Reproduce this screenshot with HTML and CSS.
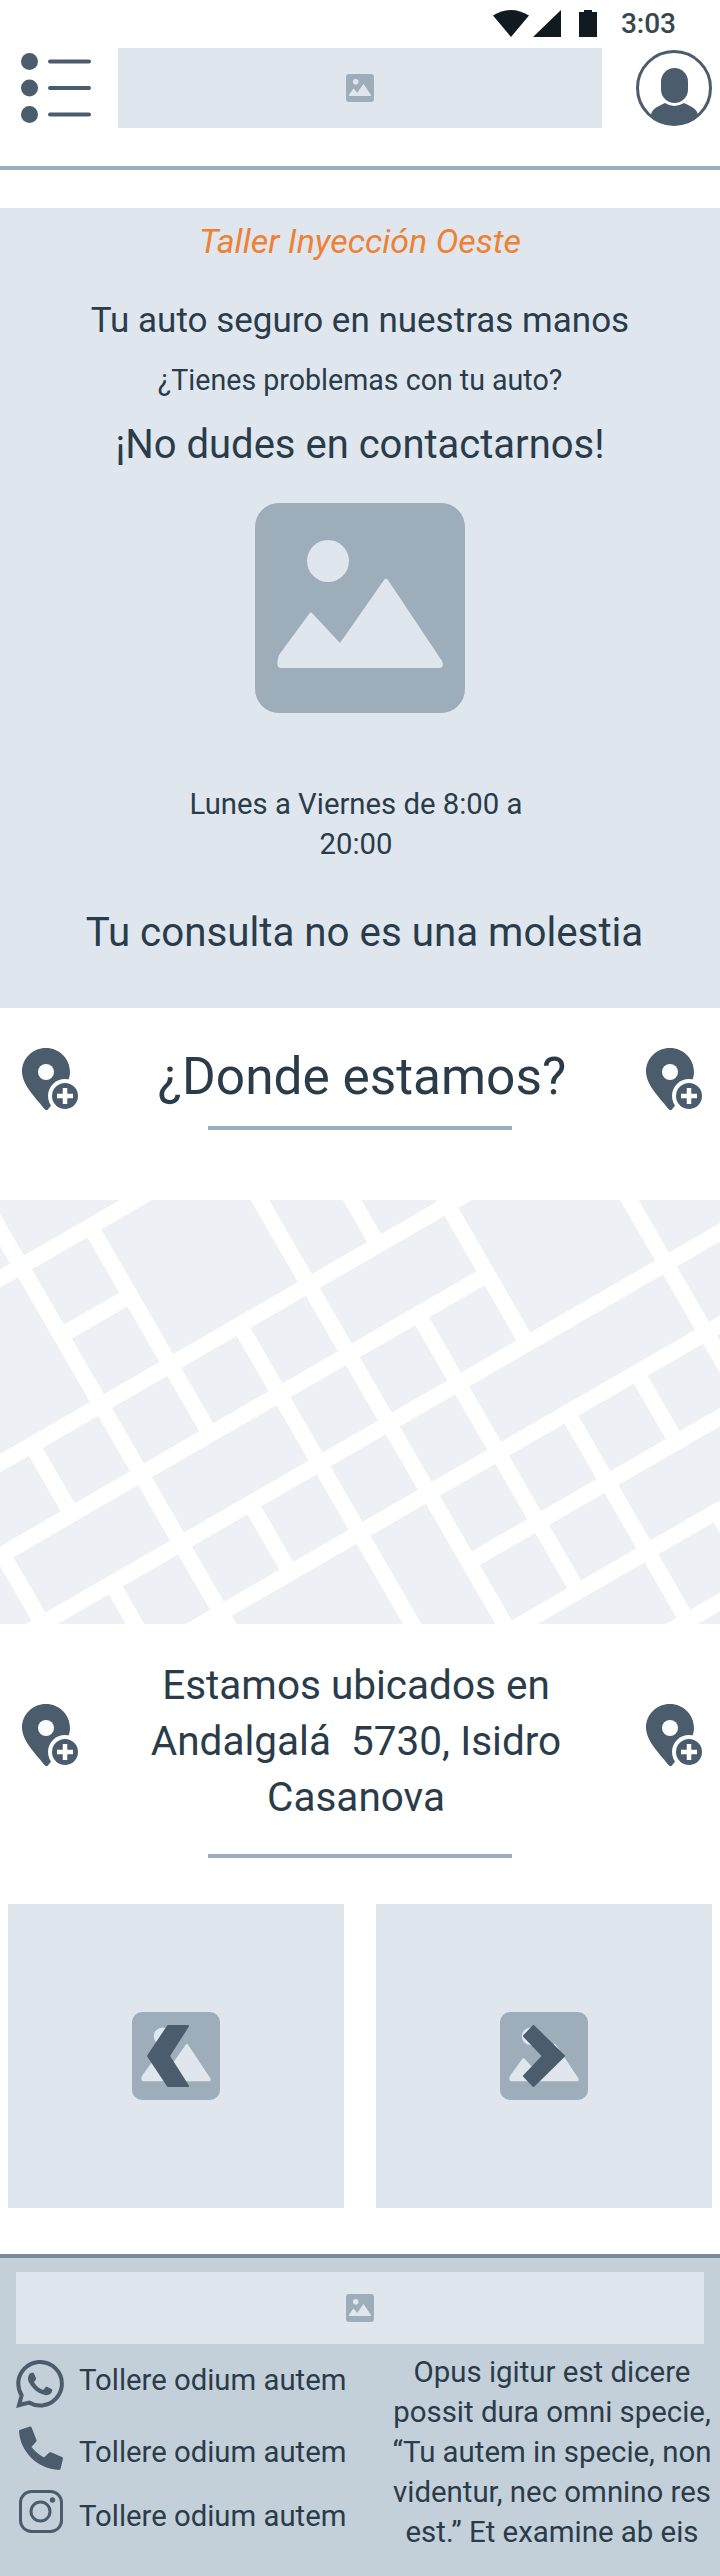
FILE: index.html
```html
<!DOCTYPE html>
<html lang="es">
<head>
    <meta charset="UTF-8">
    <meta name="viewport" content="width=device-width, initial-scale=1.0">
    <title>Taller Inyección Oeste</title>
    <link rel="stylesheet" href="styles.css">
</head>
<body>
    <!-- shared icons -->
    <svg class="icon-defs" aria-hidden="true">
        <symbol id="img-placeholder" viewBox="0 0 210 210">
            <rect width="210" height="210" rx="24" fill="#9eadba"/>
            <circle cx="73" cy="58" r="21" fill="#dfe6ee"/>
            <path d="M24 152 L54 111 Q56 108 58 111 L85 140 L129 77 Q131 74 133 77 L187 158 Q190 165 184 165 L26 165 Q20 165 24 152Z" fill="#dfe6ee"/>
        </symbol>
        <symbol id="pin-plus" viewBox="0 0 56 62">
            <path d="M24 0C37.3 0 48 10.7 48 24C48 37 33 52 26 61.5C25 62.5 23.5 62.5 22.5 61C14 50 0 37 0 23.5C0 10.5 10.7 0 24 0Z" fill="#4b5d6c"/>
            <circle cx="24" cy="24" r="8" fill="#fff"/>
            <circle cx="43" cy="48" r="17" fill="#fff"/>
            <circle cx="43" cy="48" r="13" fill="#4b5d6c"/>
            <path d="M35 48H51M43 40V56" stroke="#fff" stroke-width="4.5"/>
        </symbol>
    </svg>

    <div class="status-bar">
        <svg class="status-wifi" viewBox="0 0 36 27"><path d="M0 5.6Q18 -5.6 36 5.6L18 27Z"/></svg>
        <svg class="status-signal" viewBox="0 0 28 27"><path d="M0 27L28 0V27Z"/></svg>
        <svg class="status-battery" viewBox="0 0 18 27"><path d="M5 0H13V2H18V27H0V2H5Z"/></svg>
        <span class="status-time">3:03</span>
    </div>

    <header class="topbar">
        <svg class="menu-icon" viewBox="0 0 70 70">
            <circle cx="8.5" cy="8.5" r="8.5"/>
            <circle cx="8.5" cy="35" r="8.5"/>
            <circle cx="8.5" cy="61.5" r="8.5"/>
            <path class="menu-line" d="M29 8.5H68M29 35H68M29 61.5H68"/>
        </svg>
        <div class="logo-box">
            <svg class="img-small"><use href="#img-placeholder"/></svg>
        </div>
        <svg class="avatar" viewBox="0 0 76 76">
            <defs><clipPath id="avatar-clip"><circle cx="38" cy="38" r="36"/></clipPath></defs>
            <circle cx="38" cy="38" r="36.5" fill="none" stroke="#4b5d6c" stroke-width="3"/>
            <rect x="25" y="18" width="27" height="35" rx="13.5" fill="#4b5d6c"/>
            <path clip-path="url(#avatar-clip)" d="M15 76V66C15 60 20 57 29 53Q38 59 48 53C57 57 62 60 62 66V76Z" fill="#4b5d6c"/>
        </svg>
    </header>

    <section class="hero">
        <h1 class="hero-title">Taller Inyección Oeste</h1>
        <p class="hero-slogan">Tu auto seguro en nuestras manos</p>
        <p class="hero-question">¿Tienes problemas con tu auto?</p>
        <p class="hero-call">¡No dudes en contactarnos!</p>
        <svg class="hero-image"><use href="#img-placeholder"/></svg>
        <p class="hero-hours">Lunes a Viernes de 8:00 a<br>20:00</p>
        <p class="hero-note">Tu consulta no es una molestia</p>
    </section>

    <section class="where">
        <div class="pin-row">
            <svg class="pin"><use href="#pin-plus"/></svg>
            <h2 class="where-title">¿Donde estamos?</h2>
            <svg class="pin"><use href="#pin-plus"/></svg>
        </div>
        <div class="rule"></div>
    </section>

    <svg class="map" viewBox="0 0 720 424">
        <rect width="720" height="424" fill="#edf0f5"/>
        <g transform="rotate(-30)" fill="none" stroke="#fff" stroke-width="16">
            <!-- avenues -->
            <path d="M-500 68H900M-500 228H900M-500 388H900M-500 468H900M-500 628H900M-500 708H900"/>
            <path d="M-15 148H65M-500 308H385M225 548H900"/>
            <!-- cross streets -->
            <path d="M-15 -100V900M225 -100V900M145 228V900"/>
            <path d="M65 68V308M65 388V468M305 -100V228M305 308V628M385 -100V388M385 468V708"/>
            <path d="M-95 228V308M-95 388V900M-175 308V388M465 468V548M465 628V900M545 -100V548"/>
        </g>
    </svg>

    <section class="address">
        <div class="pin-row pin-row-address">
            <svg class="pin"><use href="#pin-plus"/></svg>
            <h3 class="address-text">Estamos ubicados en<br>Andalgalá&nbsp; 5730, Isidro<br>Casanova</h3>
            <svg class="pin"><use href="#pin-plus"/></svg>
        </div>
        <div class="rule"></div>
    </section>

    <div class="gallery">
        <div class="gallery-card">
            <div class="gallery-image">
                <svg class="img-medium"><use href="#img-placeholder"/></svg>
                <svg class="chevron" viewBox="0 0 88 88"><path d="M36 14H56L37 44L56 74H36L16 44Z"/></svg>
            </div>
        </div>
        <div class="gallery-card">
            <div class="gallery-image">
                <svg class="img-medium"><use href="#img-placeholder"/></svg>
                <svg class="chevron" viewBox="0 0 88 88"><path d="M33.5 14L64 44L33.5 74L24 64L43 44L24 24Z"/></svg>
            </div>
        </div>
    </div>

    <footer class="footer">
        <div class="footer-logo">
            <svg class="img-small"><use href="#img-placeholder"/></svg>
        </div>
        <div class="footer-columns">
            <ul class="contact-list">
                <li class="contact-row">
                    <svg class="contact-icon icon-whatsapp" viewBox="0 0 24 24"><path d="M17.472 14.382c-.297-.149-1.758-.867-2.03-.967-.273-.099-.471-.148-.67.15-.197.297-.767.966-.94 1.164-.173.199-.347.223-.644.075-.297-.15-1.255-.463-2.39-1.475-.883-.788-1.48-1.761-1.653-2.059-.173-.297-.018-.458.13-.606.134-.133.298-.347.446-.52.149-.174.198-.298.298-.497.099-.198.05-.371-.025-.52-.075-.149-.669-1.612-.916-2.207-.242-.579-.487-.5-.669-.51-.173-.008-.371-.01-.57-.01-.198 0-.52.074-.792.372-.272.297-1.04 1.016-1.04 2.479 0 1.462 1.065 2.875 1.213 3.074.149.198 2.096 3.2 5.077 4.487.709.306 1.262.489 1.694.625.712.227 1.36.195 1.871.118.571-.085 1.758-.719 2.006-1.413.248-.694.248-1.289.173-1.413-.074-.124-.272-.198-.57-.347m-5.421 7.403h-.004a9.87 9.87 0 01-5.031-1.378l-.361-.214-3.741.982.998-3.648-.235-.374a9.86 9.86 0 01-1.51-5.26c.001-5.45 4.436-9.884 9.888-9.884 2.64 0 5.122 1.03 6.988 2.898a9.825 9.825 0 012.893 6.994c-.003 5.45-4.437 9.884-9.885 9.884m8.413-18.297A11.815 11.815 0 0012.05 0C5.495 0 .16 5.335.157 11.892c0 2.096.547 4.142 1.588 5.945L.057 24l6.305-1.654a11.882 11.882 0 005.683 1.448h.005c6.554 0 11.89-5.335 11.893-11.893a11.821 11.821 0 00-3.48-8.413z"/></svg>
                    <span class="contact-text">Tollere odium autem</span>
                </li>
                <li class="contact-row">
                    <svg class="contact-icon icon-phone" viewBox="0 0 44 44"><path d="M.5 4L11 .5Q12 .3 12.5 1.3L17.5 14Q17.8 15 17 15.8L12.5 21Q17 27 25 31.5L30 26.8Q31 26 32 26.3L43 31Q44.2 31.5 44 32.7L41.5 43Q41 44 40 44C18 43 1 25 0 5Q0 4.3 .5 4Z"/></svg>
                    <span class="contact-text">Tollere odium autem</span>
                </li>
                <li class="contact-row">
                    <svg class="contact-icon icon-instagram" viewBox="0 0 44 43">
                        <rect x="1.5" y="1.5" width="41" height="40" rx="11" fill="none" stroke="#4b5d6c" stroke-width="3"/>
                        <circle cx="21.5" cy="21.5" r="9.5" fill="none" stroke="#4b5d6c" stroke-width="3"/>
                        <circle cx="33.5" cy="10" r="2.7"/>
                    </svg>
                    <span class="contact-text">Tollere odium autem</span>
                </li>
            </ul>
            <p class="footer-quote">Opus igitur est dicere<br>possit dura omni specie,<br>“Tu autem in specie, non<br>videntur, nec omnino res<br>est.” Et examine ab eis</p>
        </div>
    </footer>
</body>
</html>
```

FILE: styles.css
```css
* {
    box-sizing: border-box;
}
body {
    margin: 0;
    width: 720px;
    font-family: Roboto, "Liberation Sans", sans-serif;
    color: #2a3c4a;
    background: #fff;
}
h1, h2, h3, p, ul {
    margin: 0;
    padding: 0;
    font-weight: 400;
}
svg {
    display: block;
}
.icon-defs {
    width: 0;
    height: 0;
    position: absolute;
}

/* status bar */
.status-bar {
    height: 48px;
    display: flex;
    align-items: flex-end;
    justify-content: flex-end;
    padding-right: 44px;
    padding-bottom: 11px;
    fill: #101a20;
}
.status-wifi {
    width: 36px;
    height: 27px;
}
.status-signal {
    width: 28px;
    height: 27px;
    margin-left: 4px;
}
.status-battery {
    width: 18px;
    height: 27px;
    margin-left: 18px;
}
.status-time {
    margin-left: 24px;
    font-size: 28px;
    font-weight: 500;
    line-height: 27px;
    color: #37474f;
}

/* header */
.topbar {
    display: flex;
    align-items: flex-start;
    height: 122px;
    padding-left: 21px;
    border-bottom: 4px solid #9eadba;
}
.menu-icon {
    width: 70px;
    height: 70px;
    margin-top: 5px;
    fill: #4b5d6c;
}
.menu-line {
    fill: none;
    stroke: #4b5d6c;
    stroke-width: 4;
    stroke-linecap: round;
}
.logo-box {
    width: 484px;
    height: 80px;
    margin-left: 27px;
    background: #dfe6ee;
    display: flex;
    align-items: center;
    justify-content: center;
}
.img-small {
    width: 28px;
    height: 28px;
}
.avatar {
    width: 76px;
    height: 76px;
    margin-left: 34px;
    margin-top: 2px;
}

/* hero */
.hero {
    margin-top: 38px;
    height: 800px;
    padding-top: 13px;
    background: #dfe6ee;
    text-align: center;
    line-height: 40px;
}
.hero-title {
    font-size: 34px;
    font-style: italic;
    color: #ee8133;
}
.hero-slogan {
    margin-top: 40px;
    font-size: 35px;
}
.hero-question {
    margin-top: 19px;
    font-size: 28.6px;
}
.hero-call {
    margin-top: 25px;
    font-size: 40px;
}
.hero-image {
    width: 210px;
    height: 210px;
    margin: 38px auto 0;
}
.hero-hours {
    margin-top: 71px;
    padding-right: 8px;
    font-size: 29.3px;
}
.hero-note {
    margin-top: 49px;
    padding-left: 9px;
    font-size: 40.3px;
}

/* location headings */
.where {
    padding-top: 39px;
    height: 192px;
}
.pin-row {
    display: flex;
    align-items: flex-start;
    justify-content: space-between;
    padding: 0 18px 0 22px;
}
.pin {
    width: 56px;
    height: 62px;
    margin-top: 1px;
    flex-shrink: 0;
}
.where-title {
    font-size: 51.4px;
    line-height: 60px;
    text-align: center;
}
.rule {
    width: 304px;
    height: 4px;
    margin: 16px auto 0;
    background: #9eadba;
}

/* map */
.map {
    width: 720px;
    height: 424px;
}

/* address */
.address {
    padding-top: 33px;
}
.pin-row-address .pin {
    margin-top: 47px;
}
.address-text {
    padding-right: 12px;
    font-size: 40.5px;
    line-height: 56px;
    text-align: center;
}
.address .rule {
    margin-top: 29px;
}

/* gallery */
.gallery {
    display: flex;
    gap: 32px;
    padding: 46px 8px;
}
.gallery-card {
    width: 336px;
    height: 304px;
    background: #dfe6ee;
    display: flex;
    align-items: center;
    justify-content: center;
}
.gallery-image {
    position: relative;
    width: 88px;
    height: 88px;
}
.img-medium {
    width: 88px;
    height: 88px;
}
.chevron {
    position: absolute;
    top: 0;
    left: 0;
    width: 88px;
    height: 88px;
    fill: #4b5d6c;
    stroke: #4b5d6c;
    stroke-width: 2;
    stroke-linejoin: round;
}

/* footer */
.footer {
    height: 322px;
    padding: 14px 16px 0;
    background: #c3cfd9;
    border-top: 4px solid #7a8b99;
}
.footer-logo {
    height: 72px;
    background: #dfe6ee;
    display: flex;
    align-items: center;
    justify-content: center;
}
.footer-columns {
    display: flex;
    justify-content: space-between;
}
.contact-list {
    list-style: none;
    padding-top: 10px;
}
.contact-row {
    display: flex;
    align-items: flex-start;
    margin-bottom: 18px;
}
.contact-icon {
    width: 46px;
    height: 44px;
    margin-left: 2px;
    flex-shrink: 0;
    fill: #4b5d6c;
}
.icon-whatsapp {
    width: 48px;
    height: 48px;
    margin-left: 0;
    margin-top: 6px;
}
.icon-instagram {
    height: 43px;
}
.contact-text {
    margin-left: 15px;
    margin-top: 6px;
    font-size: 29.3px;
    line-height: 40px;
}
.footer-quote {
    width: 336px;
    margin: 8px -16px 0 0;
    font-size: 29.4px;
    line-height: 40px;
    text-align: center;
}
```
